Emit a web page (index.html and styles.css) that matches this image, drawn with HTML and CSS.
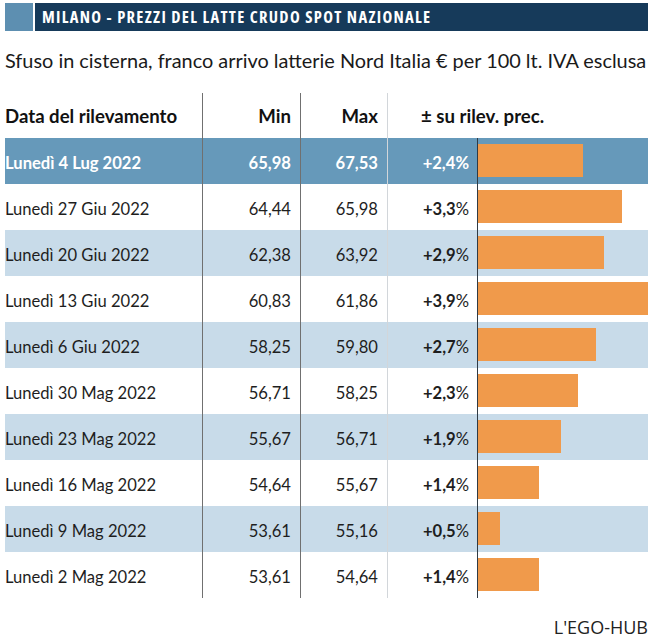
FILE: index.html
```html
<!DOCTYPE html>
<html lang="it">
<head>
<meta charset="utf-8">
<title>Milano - Prezzi del latte crudo spot nazionale</title>
<link rel="stylesheet" href="styles.css">
</head>
<body>
<div class="chart">
  <div class="titlebar">
    <div class="title-mark"></div>
    <h1 class="title">MILANO - PREZZI DEL LATTE CRUDO SPOT NAZIONALE</h1>
  </div>
  <p class="subtitle">Sfuso in cisterna, franco arrivo latterie Nord Italia € per 100 lt. IVA esclusa</p>
  <div class="table">
    <div class="row head">
      <div class="cell date">Data del rilevamento</div>
      <div class="cell num c-min">Min</div>
      <div class="cell num c-max">Max</div>
      <div class="cell head-pct">± su rilev. prec.</div>
    </div>
    <div class="row current">
      <div class="cell date">Lunedì 4 Lug 2022</div>
      <div class="cell num c-min">65,98</div>
      <div class="cell num c-max">67,53</div>
      <div class="cell num c-pct"><b>+2,4</b>%</div>
      <div class="cell c-bar"><span class="bar" style="width:105px"></span></div>
    </div>
    <div class="row">
      <div class="cell date">Lunedì 27 Giu 2022</div>
      <div class="cell num c-min">64,44</div>
      <div class="cell num c-max">65,98</div>
      <div class="cell num c-pct"><b>+3,3</b>%</div>
      <div class="cell c-bar"><span class="bar" style="width:144px"></span></div>
    </div>
    <div class="row alt">
      <div class="cell date">Lunedì 20 Giu 2022</div>
      <div class="cell num c-min">62,38</div>
      <div class="cell num c-max">63,92</div>
      <div class="cell num c-pct"><b>+2,9</b>%</div>
      <div class="cell c-bar"><span class="bar" style="width:126px"></span></div>
    </div>
    <div class="row">
      <div class="cell date">Lunedì 13 Giu 2022</div>
      <div class="cell num c-min">60,83</div>
      <div class="cell num c-max">61,86</div>
      <div class="cell num c-pct"><b>+3,9</b>%</div>
      <div class="cell c-bar"><span class="bar" style="width:171px"></span></div>
    </div>
    <div class="row alt">
      <div class="cell date">Lunedì 6 Giu 2022</div>
      <div class="cell num c-min">58,25</div>
      <div class="cell num c-max">59,80</div>
      <div class="cell num c-pct"><b>+2,7</b>%</div>
      <div class="cell c-bar"><span class="bar" style="width:118px"></span></div>
    </div>
    <div class="row">
      <div class="cell date">Lunedì 30 Mag 2022</div>
      <div class="cell num c-min">56,71</div>
      <div class="cell num c-max">58,25</div>
      <div class="cell num c-pct"><b>+2,3</b>%</div>
      <div class="cell c-bar"><span class="bar" style="width:100px"></span></div>
    </div>
    <div class="row alt">
      <div class="cell date">Lunedì 23 Mag 2022</div>
      <div class="cell num c-min">55,67</div>
      <div class="cell num c-max">56,71</div>
      <div class="cell num c-pct"><b>+1,9</b>%</div>
      <div class="cell c-bar"><span class="bar" style="width:83px"></span></div>
    </div>
    <div class="row">
      <div class="cell date">Lunedì 16 Mag 2022</div>
      <div class="cell num c-min">54,64</div>
      <div class="cell num c-max">55,67</div>
      <div class="cell num c-pct"><b>+1,4</b>%</div>
      <div class="cell c-bar"><span class="bar" style="width:61px"></span></div>
    </div>
    <div class="row alt">
      <div class="cell date">Lunedì 9 Mag 2022</div>
      <div class="cell num c-min">53,61</div>
      <div class="cell num c-max">55,16</div>
      <div class="cell num c-pct"><b>+0,5</b>%</div>
      <div class="cell c-bar"><span class="bar" style="width:22px"></span></div>
    </div>
    <div class="row">
      <div class="cell date">Lunedì 2 Mag 2022</div>
      <div class="cell num c-min">53,61</div>
      <div class="cell num c-max">54,64</div>
      <div class="cell num c-pct"><b>+1,4</b>%</div>
      <div class="cell c-bar"><span class="bar" style="width:61px"></span></div>
    </div>
  </div>
  <div class="source">L'EGO-HUB</div>
</div>
</body>
</html>
```
FILE: styles.css
```css
html, body {
  margin: 0;
  padding: 0;
  background: #ffffff;
}
.chart {
  width: 643px;
  padding: 3px 0 0 5px;
  font-family: Lato, "Open Sans", sans-serif;
  color: #1e1e1e;
}
.titlebar {
  display: flex;
  height: 28px;
  gap: 2px;
}
.title-mark {
  width: 28px;
  background: #5d8fb1;
}
.title {
  flex: 1;
  margin: 0;
  background: #163a5a;
  color: #ffffff;
  font-family: "Open Sans", sans-serif;
  font-stretch: 75%;
  font-weight: 700;
  font-size: 16.5px;
  line-height: 28px;
  padding-left: 7px;
  letter-spacing: 1.3px;
}
.subtitle {
  margin: 17px 0 0 0;
  font-size: 19.9px;
  line-height: 24px;
  white-space: nowrap;
  color: #1a1a1a;
}
.table {
  margin-top: 21px;
}
.row {
  display: grid;
  grid-template-columns: 197px 98px 87px 90px 1fr;
  height: 46px;
  font-size: 16.6px;
}
.row.head {
  height: 45px;
  font-weight: 700;
  font-size: 18.6px;
  color: #111;
}
.row.current {
  background: #6699ba;
  color: #ffffff;
  font-weight: 700;
}
.row.alt {
  background: #c8dbe9;
}
.cell {
  display: flex;
  align-items: center;
  white-space: nowrap;
  padding-top: 3px;
}
.num {
  justify-content: flex-end;
}
.c-min {
  border-left: 1px solid #707070;
  padding-right: 9px;
}
.c-max {
  border-left: 1px solid #707070;
  padding-right: 9px;
}
.c-pct {
  border-left: 1px solid #d2d6da;
  padding-right: 8px;
}
.c-pct b {
  font-weight: 700;
}
.head-pct {
  grid-column: 4 / 6;
  border-left: 1px solid #d2d6da;
  padding-left: 33px;
}
.row.head .cell {
  padding-top: 0;
}
.c-bar {
  border-left: 1px solid #2f3a44;
  align-items: flex-start;
  overflow: hidden;
  padding-top: 0;
}
.bar {
  display: block;
  height: 33px;
  margin-top: 6px;
  background: #f09a4b;
}
.source {
  margin-top: 17px;
  text-align: right;
  font-family: "Open Sans", sans-serif;
  font-stretch: 90%;
  font-size: 18px;
  color: #222;
}
```
